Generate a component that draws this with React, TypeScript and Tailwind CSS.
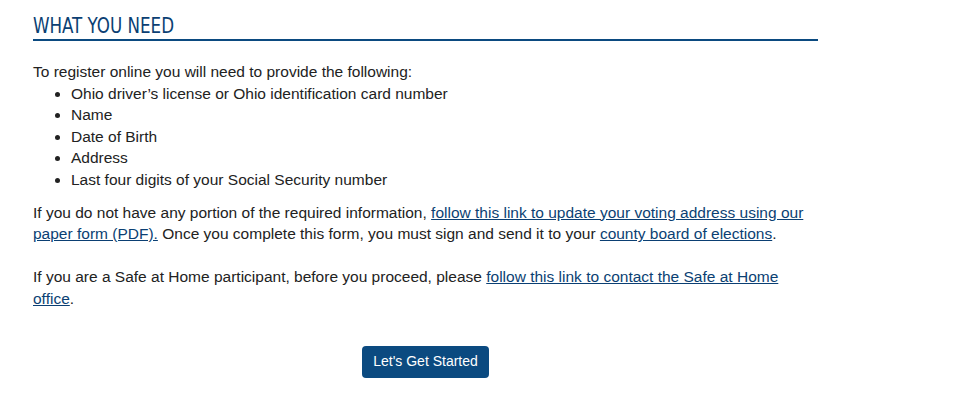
export default function App() {
  return (
    <div className="min-h-[405px] bg-white font-['Liberation_Sans',Arial,sans-serif] text-[#222]">
      <div className="ml-[33px] w-[785px] pt-[14px]">
        <h2 className="border-b-2 border-[#0b4a80] pb-[1px] font-['DejaVu_Sans_Condensed','Roboto',sans-serif] text-[21px] leading-[24px] text-[#0b3f73]">
          <span className="inline-block origin-left scale-x-[0.885]">WHAT YOU NEED</span>
        </h2>

        <div className="mt-[20px] text-[15.5px] leading-[21.6px]">
          <p>To register online you will need to provide the following:</p>
          <ul className="list-disc pl-[38px]">
            <li>Ohio driver’s license or Ohio identification card number</li>
            <li>Name</li>
            <li>Date of Birth</li>
            <li>Address</li>
            <li>Last four digits of your Social Security number</li>
          </ul>

          <p className="mt-[11px]">
            If you do not have any portion of the required information,{" "}
            <a href="#" className="text-[#0b3f73] underline">
              follow this link to update your voting address using our paper form (PDF).
            </a>{" "}
            Once you complete this form, you must sign and send it to your{" "}
            <a href="#" className="text-[#0b3f73] underline">
              county board of elections
            </a>
            .
          </p>

          <p className="mt-[21.6px]">
            If you are a Safe at Home participant, before you proceed, please{" "}
            <a href="#" className="text-[#0b3f73] underline">
              follow this link to contact the Safe at Home office
            </a>
            .
          </p>

          <div className="mt-[36px] flex justify-center">
            <button className="h-[32px] w-[127px] rounded-[4px] bg-[#0b4a80] text-[14px] text-white">
              Let's Get Started
            </button>
          </div>
        </div>
      </div>
    </div>
  );
}
